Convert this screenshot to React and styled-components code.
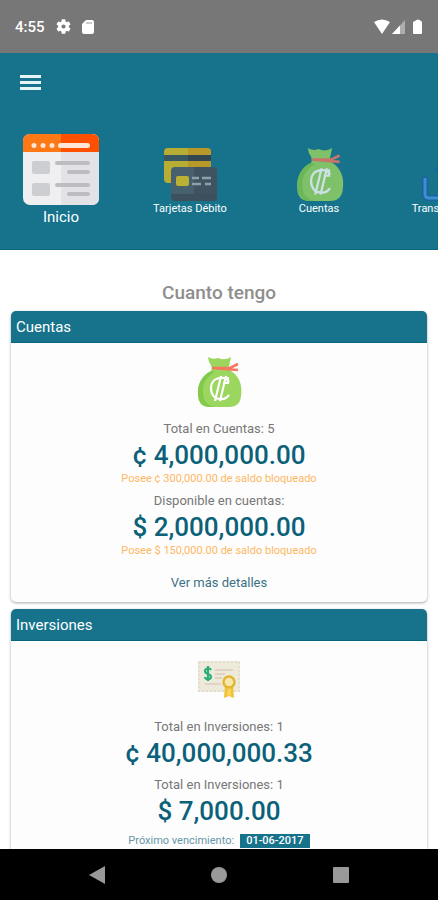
import React from "react";
import styled, { createGlobalStyle } from "styled-components";

const teal = "#17738c";
const deepTeal = "#0b6179";

const GlobalStyle = createGlobalStyle`
  * { box-sizing: border-box; }
  body {
    margin: 0;
    background: #fff;
    font-family: Roboto, "Liberation Sans", sans-serif;
  }
  button { font: inherit; border: 0; padding: 0; background: none; cursor: pointer; }
  p, h1, h2 { margin: 0; }
`;

const Screen = styled.div`
  display: flex;
  flex-direction: column;
  height: 100vh;
`;

const StatusBar = styled.div`
  display: flex;
  align-items: center;
  flex: none;
  height: 53px;
  padding: 0 12px 0 15px;
  background: #777;
  color: #fff;
`;

const Clock = styled.span`
  margin-right: 11px;
  font-size: 15px;
  font-weight: 500;
`;

const StatusIcon = styled.svg`
  display: block;
  width: ${(p) => p.$size || 16}px;
  height: ${(p) => p.$size || 16}px;
  margin-right: ${(p) => p.$gap || 0}px;
  margin-left: ${(p) => (p.$push ? "auto" : "0")};
  fill: #fff;
`;

const Header = styled.header`
  flex: none;
  height: 197px;
  background: ${teal};
  border-bottom: 1px solid #07647f;
`;

const MenuButton = styled.button`
  display: flex;
  flex-direction: column;
  justify-content: center;
  gap: 3px;
  width: 45px;
  height: 59px;
  margin-left: 16px;
  padding: 0 4px;
`;

const MenuLine = styled.span`
  height: 3px;
  width: 21px;
  background: #e6f4f6;
`;

const Tabs = styled.nav`
  display: flex;
  align-items: center;
  gap: 7px;
  height: 139px;
  overflow-x: auto;
  scrollbar-width: none;
`;

const Tab = styled.button`
  display: flex;
  flex: none;
  flex-direction: column;
  align-items: center;
  width: 122px;
  color: #fff;
  font-size: ${(p) => (p.$active ? 15 : 11)}px;
  line-height: ${(p) => (p.$active ? 24 : 14)}px;
`;

const TabIcon = styled.svg`
  display: block;
  width: ${(p) => p.$size}px;
  height: ${(p) => p.$tall || p.$size}px;
  opacity: ${(p) => p.$fade || 1};
`;

const Content = styled.main`
  flex: 1;
  min-height: 0;
  padding: 31px 11px 0;
  overflow-y: auto;
  scrollbar-width: none;
`;

const Title = styled.h1`
  padding-bottom: 6px;
  color: #8e8e8e;
  font-size: 19px;
  line-height: 24px;
  font-weight: 500;
  text-align: center;
`;

const Card = styled.section`
  margin-bottom: 7px;
  border-radius: 5px;
  background: #fdfdfd;
  box-shadow: 0 1px 3px rgba(0, 0, 0, 0.35);
  text-align: center;
`;

const CardTitle = styled.h2`
  height: 32px;
  padding-left: 5px;
  border-radius: 5px 5px 0 0;
  border-bottom: 1px solid #07647f;
  background: ${teal};
  color: #fff;
  font-size: 15px;
  line-height: 32px;
  font-weight: 400;
  text-align: left;
`;

const CardBody = styled.div`
  padding: 13px 5px 10px;
`;

const CardIcon = styled.svg`
  display: block;
  width: 52px;
  height: 52px;
  margin: 0 auto 12px;
`;

const Group = styled.div`
  margin-bottom: 6px;
`;

const Caption = styled.p`
  color: #777;
  font-size: 13px;
  line-height: 18px;
`;

const Amount = styled.p`
  color: ${deepTeal};
  font-size: 26px;
  line-height: 34px;
  font-weight: 500;
`;

const Blocked = styled.p`
  color: #ffb762;
  font-size: 11px;
  line-height: 14px;
`;

const Details = styled.a`
  display: block;
  margin-top: 16px;
  color: #3c7184;
  font-size: 13px;
  line-height: 18px;
  text-decoration: none;
`;

const Due = styled.div`
  display: flex;
  justify-content: center;
  align-items: center;
  gap: 6px;
  color: #6795a5;
  font-size: 11px;
  line-height: 14px;
`;

const DueDate = styled.time`
  padding: 0 6px;
  background: ${teal};
  color: #fff;
  font-weight: 500;
`;

const SystemBar = styled.footer`
  display: flex;
  justify-content: space-around;
  align-items: center;
  flex: none;
  height: 51px;
  padding: 0 36px;
  background: #000;
`;

const SystemButton = styled.button`
  display: grid;
  place-items: center;
  width: 24px;
  height: 40px;
`;

const MoneyBag = () => (
  <>
    <path d="M15 1 Q20 4 25 2 Q32 5 38 1 L36 10 Q35 12 38 15 C45 19 50 28 48 40 Q47 51 36 51 H15 Q5 50 5 39 C4 27 11 19 18 15 Q20 11 16 6Z" fill="#9bd75e" />
    <path d="M18 15 C9 19 4 28 5 39 Q6 50 16 51 H21 Q10 48 10 37 C9 26 15 20 22 16Z" fill="#83c94c" />
    <path d="M19 12 H37 L45 8 M20 12 L45 14" fill="none" stroke="#f7765e" strokeWidth="2.6" />
    <path d="M36 26 Q33 21 28 22 C21 22 18 27 18 32 C18 39 22 43 27 43 Q32 44 36 39 M35 21 V27 H30 M28 20 L22 45 M33 20 L27 45" fill="none" stroke="#fff" strokeWidth="2.2" />
  </>
);

const Certificate = () => (
  <>
    <rect x="5" y="7" width="42" height="31" fill="#eeeadb" />
    <rect x="6" y="8" width="40" height="29" fill="none" stroke="#e0dcc8" strokeWidth="1.5" strokeDasharray="2 2" />
    <path d="M22 16 H40 M22 20 H32 M22 24 H29 M12 30 H28" stroke="#dccbbb" strokeWidth="1.4" />
    <path d="M18 16 Q17 14 15 14 Q12 15 12 17 Q12 19 15 20 Q18 21 18 23 Q18 25 15 25 Q12 25 12 23 M15 12 V27" fill="none" stroke="#29af75" strokeWidth="2.2" />
    <path d="M32 31 L31 44 L36 42 L41 44 L40 31Z" fill="#efc13a" />
    <path d="M35 32 L34 42 L36 41 L38 42 L38 32Z" fill="#f9d856" />
    <circle cx="36" cy="28" r="5.5" fill="#f5e7ad" stroke="#e2b52d" strokeWidth="2.4" />
  </>
);

const HomePage = () => (
  <>
    <rect width="76" height="71" rx="7" fill="#efeff1" />
    <path d="M38 0 H69 Q76 0 76 7 V64 Q76 71 69 71 H38Z" fill="#e2e2e7" />
    <path d="M0 18 V7 Q0 0 7 0 H38 V18Z" fill="#ff7816" />
    <path d="M38 0 H69 Q76 0 76 7 V18 H38Z" fill="#ff5000" />
    <g fill="#ffe6d8">
      <circle cx="11" cy="11.500" r="2.500" />
      <circle cx="20" cy="11.500" r="2.500" />
      <circle cx="29" cy="11.500" r="2.500" />
      <rect x="35" y="9" width="32" height="5" rx="2.500" />
    </g>
    <g fill="#ccced1">
      <rect x="9" y="27" width="18" height="13" rx="2" />
      <rect x="9" y="49" width="18" height="13" rx="2" />
    </g>
    <g fill="#bbbdc1">
      <rect x="32" y="27" width="35" height="4" rx="2" />
      <rect x="44" y="36" width="23" height="4" rx="2" />
      <rect x="32" y="49" width="35" height="4" rx="2" />
      <rect x="44" y="58" width="23" height="4" rx="2" />
    </g>
  </>
);

const BankCards = () => (
  <>
    <rect x="1" y="1" width="47" height="35" rx="4" fill="#b7ad34" />
    <path d="M25 1 H44 Q48 1 48 5 V36 H25Z" fill="#b79828" />
    <path d="M1 8 H48 V14 H1Z" fill="#395763" />
    <path d="M25 8 H48 V14 H25Z" fill="#304752" />
    <rect x="8" y="20" width="46" height="34" rx="4" fill="#47606d" />
    <path d="M31 20 H50 Q54 20 54 24 V50 Q54 54 50 54 H31Z" fill="#405361" />
    <path d="M8 47 H54 V50 Q54 54 50 54 H12 Q8 54 8 50Z" fill="#3c505d" />
    <rect x="13" y="29" width="13" height="10" rx="2" fill="#b9b034" />
    <path d="M29 31 H36 M39 31 H48 M29 37 H38 M42 37 H48" stroke="#8ba1aa" strokeWidth="2.5" />
  </>
);

const Transfer = () => (
  <>
    <path d="M4 30 V47 Q4 51 8 51 H46 Q50 51 50 47 V30" fill="none" stroke="#1b62a0" strokeWidth="6" />
    <path d="M4 31 V47 Q4 51 8 51 H46" fill="none" stroke="#3f8fd0" strokeWidth="3" />
    <path d="M19 40 V24 H13 L27 8 L41 24 H35 V40Z" fill="#1b62a0" />
  </>
);

const tabs = [
  { label: "Inicio", art: HomePage, box: "0 0 76 71", size: 76, tall: 71, active: true },
  { label: "Tarjetas Débito", art: BankCards, box: "0 0 55 55", size: 55 },
  { label: "Cuentas", art: MoneyBag, box: "0 0 52 52", size: 55, fade: 0.78 },
  { label: "Transferencias", art: Transfer, box: "0 0 54 55", size: 54, tall: 55 },
];

const cards = [
  {
    title: "Cuentas",
    art: MoneyBag,
    groups: [
      { caption: "Total en Cuentas: 5", amount: "¢ 4,000,000.00", blocked: "Posee ¢ 300,000.00 de saldo bloqueado" },
      { caption: "Disponible en cuentas:", amount: "$ 2,000,000.00", blocked: "Posee $ 150,000.00 de saldo bloqueado" },
    ],
    details: "Ver más detalles",
  },
  {
    title: "Inversiones",
    art: Certificate,
    groups: [
      { caption: "Total en Inversiones: 1", amount: "¢ 40,000,000.33" },
      { caption: "Total en Inversiones: 1", amount: "$ 7,000.00" },
    ],
    due: "01-06-2017",
  },
];

const App = () => (
  <Screen>
    <GlobalStyle />
    <StatusBar>
      <Clock>4:55</Clock>
      <StatusIcon viewBox="2 2 20 20" $size={15} $gap={9}>
        <path d="M19.140 12.940c.04-.3.06-.61.06-.94s-.02-.64-.07-.94l2.030-1.580a.49.49 0 0 0 .12-.61l-1.920-3.320a.49.49 0 0 0-.59-.22l-2.390.96a7 7 0 0 0-1.620-.94l-.36-2.540A.48.48 0 0 0 13.920 2.400h-3.840a.48.48 0 0 0-.47.41l-.36 2.540a7.300 7.300 0 0 0-1.620.94l-2.390-.96a.48.48 0 0 0-.59.22L2.740 8.870a.48.48 0 0 0 .12.61l2.030 1.580a6 6 0 0 0 0 1.880l-2.030 1.580a.49.49 0 0 0-.12.61l1.920 3.320c.12.22.37.29.59.22l2.390-.96c.5.380 1.030.7 1.620.94l.36 2.540c.05.24.24.41.48.41h3.840c.24 0 .44-.17.47-.41l.36-2.540a7.300 7.300 0 0 0 1.620-.94l2.390.96c.22.08.47 0 .59-.22l1.920-3.320a.48.48 0 0 0-.12-.61zM12 14.800a2.800 2.800 0 1 1 0-5.600 2.800 2.800 0 0 1 0 5.600z" />
      </StatusIcon>
      <StatusIcon viewBox="0 0 16 16">
        <path d="M6 1 H12 Q14 1 14 3 V13 Q14 15 12 15 H4 Q2 15 2 13 V5Z" />
        <path d="M7 3 V5 M9 3 V5 M11 3 V5" stroke="#999" />
      </StatusIcon>
      <StatusIcon viewBox="0 0 16 16" $push $gap={1}>
        <path d="M0 3 Q8 -2 16 3 L8 15Z" />
      </StatusIcon>
      <StatusIcon viewBox="0 0 16 16" $gap={3}>
        <path d="M14 1 V15 H1Z" opacity=".4" />
        <path d="M9 6.500 V15 H1Z" />
      </StatusIcon>
      <StatusIcon viewBox="0 0 16 16">
        <path d="M5 2 Q8 -1 11 2 Q12 2 12 4 V14 Q12 15 11 15 H4 Q3 15 3 14 V4 Q3 2 5 2Z" />
      </StatusIcon>
    </StatusBar>
    <Header>
      <MenuButton aria-label="Menú">
        <MenuLine />
        <MenuLine />
        <MenuLine />
      </MenuButton>
      <Tabs>
        {tabs.map(({ label, art: Art, box, size, tall, active, fade }) => (
          <Tab key={label} $active={active}>
            <TabIcon viewBox={box} $size={size} $tall={tall} $fade={fade}>
              <Art />
            </TabIcon>
            {label}
          </Tab>
        ))}
      </Tabs>
    </Header>
    <Content>
      <Title>Cuanto tengo</Title>
      {cards.map(({ title, art: Art, groups, details, due }) => (
        <Card key={title}>
          <CardTitle>{title}</CardTitle>
          <CardBody>
            <CardIcon viewBox="0 0 52 52">
              <Art />
            </CardIcon>
            {groups.map((g) => (
              <Group key={g.amount}>
                <Caption>{g.caption}</Caption>
                <Amount>{g.amount}</Amount>
                {g.blocked && <Blocked>{g.blocked}</Blocked>}
              </Group>
            ))}
            {details && <Details href="#cuentas">{details}</Details>}
            {due && (
              <Due>
                Próximo vencimiento: <DueDate dateTime="2017-06-01">{due}</DueDate>
              </Due>
            )}
          </CardBody>
        </Card>
      ))}
    </Content>
    <SystemBar>
      <SystemButton aria-label="Atrás">
        <svg width="18" height="18" viewBox="0 0 18 18"><path d="M1 9 L17 0 V18Z" fill="#999" /></svg>
      </SystemButton>
      <SystemButton aria-label="Pantalla de inicio">
        <svg width="18" height="18" viewBox="0 0 18 18"><circle cx="9" cy="9" r="8" fill="#999" /></svg>
      </SystemButton>
      <SystemButton aria-label="Recientes">
        <svg width="18" height="18" viewBox="0 0 18 18"><rect x="1" y="1" width="16" height="16" rx="1" fill="#999" /></svg>
      </SystemButton>
    </SystemBar>
  </Screen>
);

export default App;
